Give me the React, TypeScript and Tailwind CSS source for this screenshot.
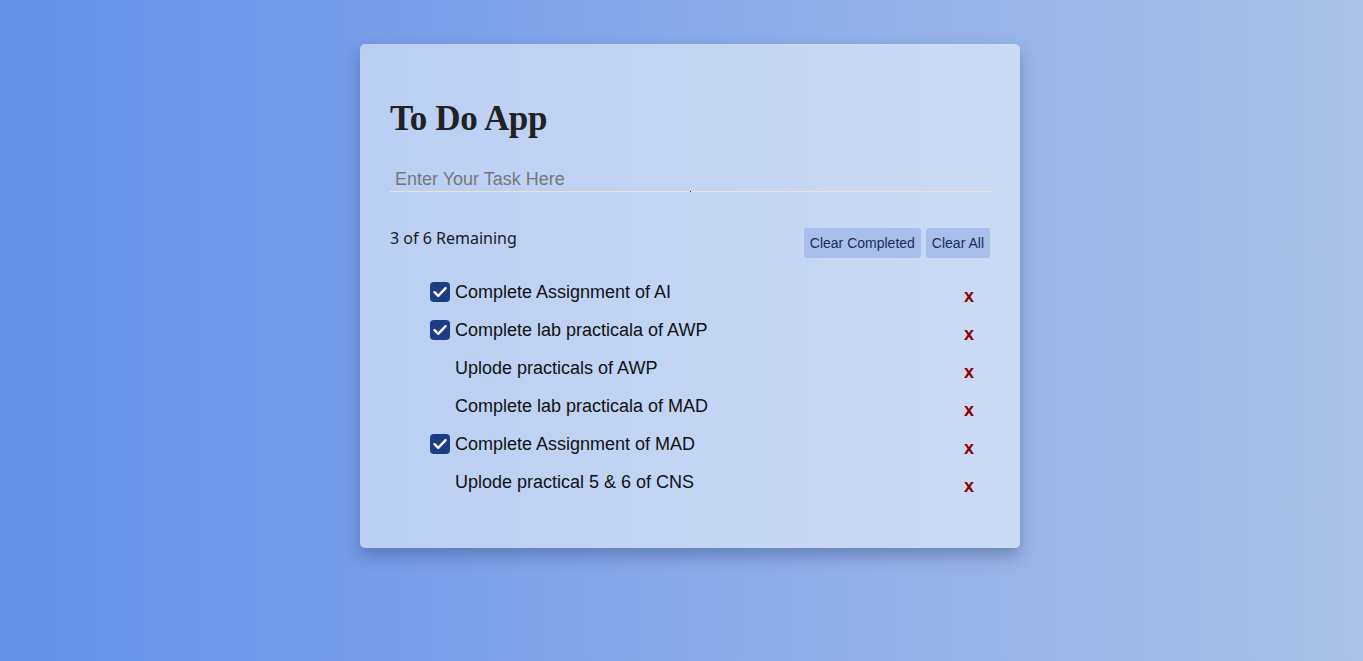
import { useState } from 'react';

type Task = { id: number; text: string; done: boolean };

const initialTasks: Task[] = [
  { id: 1, text: 'Complete Assignment of AI', done: true },
  { id: 2, text: 'Complete lab practicala of AWP', done: true },
  { id: 3, text: 'Uplode practicals of AWP', done: false },
  { id: 4, text: 'Complete lab practicala of MAD', done: false },
  { id: 5, text: 'Complete Assignment of MAD', done: true },
  { id: 6, text: 'Uplode practical 5 & 6 of CNS', done: false },
];

function CheckBox({ checked, onToggle }: { checked: boolean; onToggle: () => void }) {
  return (
    <button
      type="button"
      onClick={onToggle}
      className={`flex h-[20px] w-[20px] shrink-0 items-center justify-center rounded-[4px] ${
        checked ? 'bg-[#1c3d85]' : 'bg-transparent'
      }`}
    >
      {checked && (
        <svg width="16" height="16" viewBox="0 0 16 16" fill="none">
          <path d="M2.5 8.2 L6.2 11.8 L13.6 4.2" stroke="white" strokeWidth="2.4" strokeLinecap="round" strokeLinejoin="round" />
        </svg>
      )}
    </button>
  );
}

export default function App() {
  const [tasks, setTasks] = useState<Task[]>(initialTasks);
  const [input, setInput] = useState('');

  const remaining = tasks.filter((t) => !t.done).length;

  function toggle(id: number) {
    setTasks(tasks.map((t) => (t.id === id ? { ...t, done: !t.done } : t)));
  }
  function remove(id: number) {
    setTasks(tasks.filter((t) => t.id !== id));
  }

  return (
    <div className="flex h-[692px] w-[1380px] flex-col items-center bg-gradient-to-r from-[#6290e8] to-[#acc2e8] pt-[44px]">
      <div className="w-[660px] rounded-[5px] bg-white/[0.5] px-[30px] pt-[55px] pb-[47px] shadow-[0_8px_16px_rgba(20,30,80,0.3)]">
        <h1 className="text-[35px] leading-[40px] font-bold tracking-[-0.01em] text-[#222] [font-family:'Liberation_Serif',serif]">
          To Do App
        </h1>

        <div className="relative mt-[22px]">
          <input
            value={input}
            onChange={(e) => setInput(e.target.value)}
            onKeyDown={(e) => {
              if (e.key === 'Enter' && input.trim()) {
                setTasks([...tasks, { id: Date.now(), text: input.trim(), done: false }]);
                setInput('');
              }
            }}
            placeholder="Enter Your Task Here"
            className="h-[31px] w-full border-b border-[#efe4c6] bg-transparent pt-[7px] pl-[5px] text-[18px] text-[#222] outline-none placeholder:text-[#777] [font-family:'Liberation_Sans',Arial,sans-serif]"
          />
          <span className="absolute bottom-0 left-[300px] h-[1px] w-[1px] bg-[#1c2c60]" />
        </div>

        <div className="mt-[36px] flex items-start justify-between">
          <p className="pt-[2px] text-[16px] leading-[16px] text-[#1a1a1a] [font-family:'Noto_Sans',sans-serif]">
            {remaining} of {tasks.length} Remaining
          </p>
          <div className="flex gap-[5px]">
            <button
              type="button"
              onClick={() => setTasks(tasks.filter((t) => !t.done))}
              className="h-[30px] rounded-[3px] bg-[#a7bfea] px-[6px] text-[14px] text-[#1e2a58] [font-family:'Liberation_Sans',Arial,sans-serif]"
            >
              Clear Completed
            </button>
            <button
              type="button"
              onClick={() => setTasks([])}
              className="h-[30px] rounded-[3px] bg-[#a7bfea] px-[6px] text-[14px] text-[#1e2a58] [font-family:'Liberation_Sans',Arial,sans-serif]"
            >
              Clear All
            </button>
          </div>
        </div>

        <ul className="mt-[15px] pl-[40px] pr-[16px]">
          {tasks.map((task) => (
            <li key={task.id} className="flex h-[38px] items-center">
              <CheckBox checked={task.done} onToggle={() => toggle(task.id)} />
              <span className="ml-[5px] grow text-[18px] text-[#111] [font-family:'Liberation_Sans',Arial,sans-serif]">
                {task.text}
              </span>
              <button
                type="button"
                onClick={() => remove(task.id)}
                className="mt-[8px] text-[18px] leading-[20px] font-bold text-[#8b0000] [font-family:'Liberation_Sans',Arial,sans-serif]"
              >
                x
              </button>
            </li>
          ))}
        </ul>
      </div>
    </div>
  );
}
